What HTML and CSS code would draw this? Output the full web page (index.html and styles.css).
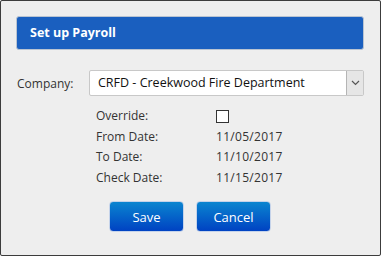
FILE: index.html
```html
<!DOCTYPE html>
<html lang="en">
<head>
    <meta charset="UTF-8">
    <title>Set up Payroll</title>
    <link rel="stylesheet" href="styles.css">
</head>
<body>
    <div class="dialog">
        <div class="dialog-title">Set up Payroll</div>

        <div class="company-row">
            <label class="company-label">Company:</label>
            <div class="select">
                <span class="select-text">CRFD - Creekwood Fire Department</span>
                <span class="select-arrow">
                    <svg width="9" height="6" viewBox="0 0 9 6"><path d="M1 1 L4.5 4.5 L8 1" fill="none" stroke="#555" stroke-width="1.2"/></svg>
                </span>
            </div>
        </div>

        <div class="details">
            <span class="label">Override:</span>
            <span class="value"><span class="checkbox"></span></span>
            <span class="label">From Date:</span>
            <span class="value">11/05/2017</span>
            <span class="label">To Date:</span>
            <span class="value">11/10/2017</span>
            <span class="label">Check Date:</span>
            <span class="value">11/15/2017</span>
        </div>

        <div class="buttons">
            <button class="btn">Save</button>
            <button class="btn">Cancel</button>
        </div>
    </div>
</body>
</html>
```

FILE: styles.css
```css
html, body {
    margin: 0;
    padding: 0;
    background: #eeeeee;
}
body {
    font-family: "Open Sans", "Noto Sans", sans-serif;
    font-size: 12px;
    color: #333;
}
.dialog {
    width: 381px;
    height: 256px;
    border: 1px solid #3c3c3c;
    border-radius: 2px;
    background: #eeeeee;
    padding: 15px 16px 0 15px;
    box-sizing: border-box;
}
.dialog-title {
    height: 32px;
    line-height: 32px;
    background: #1a5fbf;
    border: 1px solid #b9c4d2;
    border-radius: 3px;
    color: #fff;
    font-weight: bold;
    font-size: 12.5px;
    padding-left: 13px;
}
.company-row {
    display: flex;
    align-items: center;
    margin-top: 20px;
    padding-left: 1px;
}
.company-label {
    width: 72px;
}
.select {
    flex: 1;
    height: 24px;
    display: flex;
    background: #fff;
    border: 1px solid #c8c8c8;
    border-radius: 2px;
}
.select-text {
    flex: 1;
    line-height: 24px;
    padding-left: 8px;
    font-size: 12.5px;
    color: #111;
}
.select-arrow {
    width: 16px;
    background: #e6e6e6;
    border-left: 1px solid #b5b5b5;
    display: flex;
    align-items: center;
    justify-content: center;
}
.details {
    display: grid;
    grid-template-columns: 120px auto;
    row-gap: 3px;
    margin: 11px 0 0 80px;
    line-height: 17.5px;
}
.value {
    letter-spacing: 0.3px;
}
.checkbox {
    display: inline-block;
    width: 11px;
    height: 11px;
    border: 1px solid #333;
    background: #fff;
    vertical-align: middle;
}
.buttons {
    display: flex;
    justify-content: center;
    gap: 12px;
    margin-top: 15px;
}
.btn {
    width: 75px;
    height: 31px;
    border: 1px solid #c5d3ea;
    border-radius: 4px;
    background: linear-gradient(#0a85d0, #0042c2);
    color: #fff;
    font-family: inherit;
    font-size: 13px;
    cursor: pointer;
}
```
